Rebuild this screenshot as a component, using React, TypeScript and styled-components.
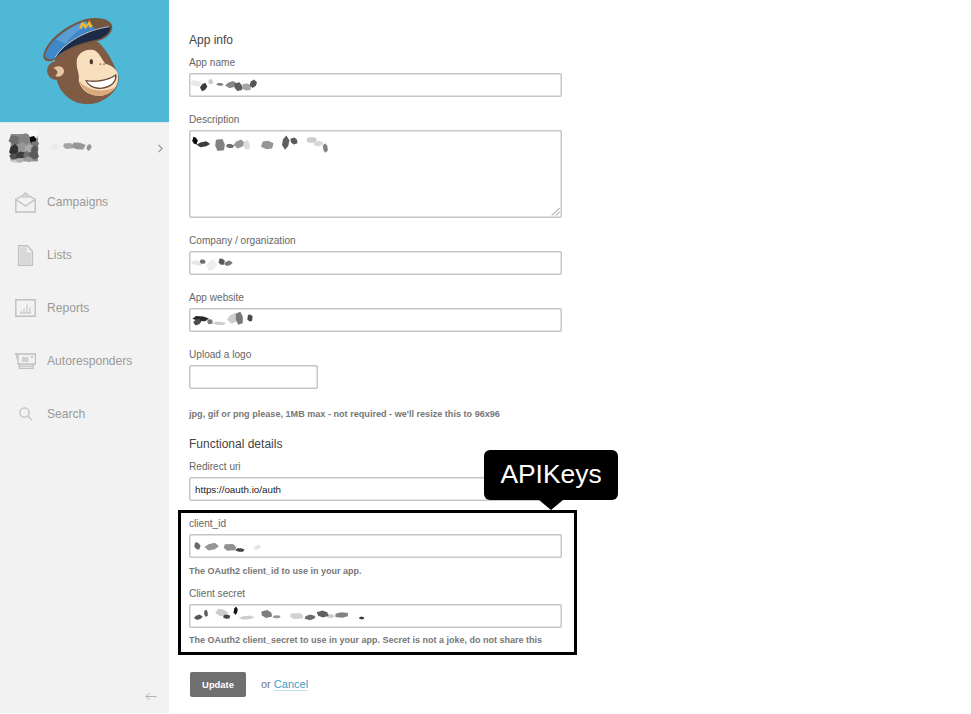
import React from "react";
import styled, { createGlobalStyle } from "styled-components";

const GlobalStyle = createGlobalStyle`
  html, body {
    margin: 0;
    padding: 0;
    background: #fff;
    overflow: hidden;
    font-family: "Liberation Sans", Arial, sans-serif;
  }
`;

const Page = styled.div`
  display: flex;
  width: 971px;
  height: 714px;
`;

const Sidebar = styled.aside`
  display: flex;
  flex-direction: column;
  flex: 0 0 169px;
  height: 713px;
  background: #f2f2f2;
`;

const Brand = styled.div`
  display: flex;
  justify-content: flex-start;
  align-items: flex-start;
  height: 123px;
  padding: 5px 0 0 30px;
  box-sizing: border-box;
  background: #4fb8d6;
  border-bottom: 1px solid #d8eef4;
`;

const Account = styled.div`
  position: relative;
  height: 52px;
`;

const AccountSmear = styled.svg`
  display: block;
  filter: blur(0.5px);
`;

const Chevron = styled.svg`
  position: absolute;
  left: 157px;
  top: 21px;
`;

const Nav = styled.nav`
  display: flex;
  flex-direction: column;
  gap: 29px;
  padding: 15px 0 0 15px;
`;

const NavItem = styled.a`
  display: flex;
  align-items: center;
  gap: 11px;
  height: 24px;
  font-size: 12.1px;
  color: #9a9a9a;
`;

const NavIcon = styled.svg`
  flex: 0 0 21px;
`;

const Collapse = styled.div`
  display: flex;
  justify-content: flex-end;
  margin-top: auto;
  padding: 0 12px 12px 0;
`;

const Main = styled.main`
  flex: 1;
  padding: 33px 0 0 20px;
`;

const Heading = styled.h2`
  margin: 0 0 8px;
  font-size: 12px;
  line-height: 14px;
  font-weight: 400;
  color: #444;
`;

const Field = styled.div<{ $gap?: number }>`
  margin-bottom: ${({ $gap }) => $gap ?? 15}px;
`;

const Label = styled.label`
  display: block;
  padding-top: 1px;
  margin-bottom: 3px;
  font-size: 10.1px;
  line-height: 14px;
  color: #666;
`;

const Input = styled.div<{ $width?: number; $height?: number }>`
  position: relative;
  width: ${({ $width }) => $width ?? 373}px;
  height: ${({ $height }) => $height ?? 24}px;
  box-sizing: border-box;
  padding: 0 6px;
  border-radius: 2px;
  box-shadow: inset 0 0 0 1.5px #c6c6c6;
  background: #fff;
  font-size: 9.8px;
  line-height: 25px;
  color: #222;
`;

const SmearSvg = styled.svg`
  position: absolute;
  left: 0;
  top: 0;
  filter: blur(0.4px);
`;

const Grip = styled.svg`
  position: absolute;
  right: 2px;
  bottom: 2px;
`;

const Hint = styled.p<{ $top?: number; $gap?: number; $size?: number }>`
  margin: ${({ $top }) => $top ?? 0}px 0 ${({ $gap }) => $gap ?? 0}px;
  font-size: ${({ $size }) => $size ?? 9}px;
  line-height: 14px;
  font-weight: 700;
  color: #777;
`;

const KeysBox = styled.section`
  position: relative;
  width: 399px;
  box-sizing: border-box;
  margin: -6px 0 17px -11px;
  padding: 3px 0 5px 8px;
  border: 3px solid #000;
`;

const Callout = styled.div`
  position: absolute;
  left: 303px;
  top: -63px;
  width: 134px;
  height: 50px;
  border-radius: 6px;
  background: #000;
  color: #fff;
  font-size: 26.4px;
  line-height: 48px;
  text-align: center;

  &::after {
    content: "";
    position: absolute;
    left: 55px;
    bottom: -10px;
    border-left: 12px solid transparent;
    border-right: 12px solid transparent;
    border-top: 10px solid #000;
  }
`;

const Actions = styled.div`
  display: flex;
  align-items: center;
  padding-left: 1px;
`;

const UpdateButton = styled.button`
  width: 56px;
  height: 25px;
  padding: 0;
  border: 0;
  border-radius: 2px;
  background: #6f6f6f;
  color: #fff;
  font-family: inherit;
  font-size: 9.4px;
  font-weight: 700;
`;

const OrText = styled.span`
  margin: -2px 0 0 15px;
  font-size: 11px;
  color: #777;
`;

const CancelLink = styled.a`
  border-bottom: 1px solid #bfe3ee;
  color: #36a2c4;
`;

type Blob = [number, number, number, number, number];

// rough polygon so the redacted values look like the pixelated smear in the shot
const blobPoints = ([cx, cy, rx, ry]: Blob, seed: number) => {
  const pts: string[] = [];
  for (let i = 0; i < 6; i++) {
    const a = (i / 6) * Math.PI * 2 + seed;
    const k = 1 + 0.45 * Math.abs(Math.sin(seed * 7.3 + i * 2.1));
    pts.push(`${(cx + Math.cos(a) * rx * k).toFixed(1)},${(cy + Math.sin(a) * ry * k).toFixed(1)}`);
  }
  return pts.join(" ");
};

const shade = (v: number) => `rgb(${v},${v},${v})`;

const Smear: React.FC<{ blobs: Blob[]; top: number; height?: number }> = ({ blobs, top, height = 24 }) => (
  <SmearSvg width={373} height={height} viewBox={`57 ${top} 1119 ${height * 3}`}>
    {blobs.map((b, i) => (
      <polygon key={i} points={blobPoints(b, i + 1)} fill={shade(b[4])} />
    ))}
  </SmearSvg>
);

const nameBlobs: Blob[] = [
  [78, 190, 13, 8, 232], [101, 201, 8, 10, 60], [122, 185, 7, 6, 205], [150, 193, 8, 4, 130],
  [184, 194, 14, 8, 135], [205, 200, 11, 10, 95], [230, 201, 11, 10, 165], [250, 191, 9, 9, 85],
];
const descBlobs: Blob[] = [
  [75, 362, 6, 10, 10], [100, 373, 15, 7, 60], [150, 375, 14, 14, 130], [180, 378, 9, 6, 110],
  [208, 372, 13, 10, 150], [230, 375, 9, 11, 220], [292, 375, 14, 12, 150], [347, 368, 9, 15, 95],
  [372, 363, 9, 8, 90], [425, 360, 12, 8, 205], [445, 371, 13, 6, 215], [466, 384, 6, 11, 130],
];
const companyBlobs: Blob[] = [
  [82, 99, 14, 7, 230], [125, 106, 12, 14, 238], [98, 95, 8, 5, 110], [155, 95, 7, 9, 90], [175, 100, 10, 6, 120],
];
const websiteBlobs: Blob[] = [
  [92, 266, 18, 7, 40], [82, 276, 9, 8, 75], [120, 275, 8, 6, 120], [148, 280, 14, 5, 205],
  [190, 265, 14, 12, 205], [208, 265, 10, 15, 120], [240, 264, 6, 10, 75],
];
const clientBlobs: Blob[] = [
  [82, 318, 7, 10, 105], [125, 320, 16, 9, 150], [180, 322, 18, 8, 145], [210, 330, 10, 5, 70], [262, 322, 9, 6, 230],
];
const secretBlobs: Blob[] = [
  [155, 518, 14, 10, 205], [230, 533, 18, 5, 205], [380, 528, 20, 7, 210], [480, 528, 10, 6, 205],
  [85, 532, 10, 6, 85], [108, 520, 5, 8, 90], [170, 530, 8, 6, 70],
  [197, 512, 5, 9, 20], [290, 522, 14, 9, 125], [320, 530, 9, 4, 150],
  [420, 532, 14, 6, 110], [458, 522, 14, 8, 95], [515, 525, 16, 7, 130], [575, 534, 7, 3, 60],
];
const accountBlobs: Blob[] = [
  [165, 441, 10, 10, 235], [205, 438, 15, 7, 165], [235, 438, 16, 10, 150], [267, 442, 6, 8, 150],
];
const avatarBlobs: Blob[] = [
  [100, 403, 14, 9, 250], [45, 420, 14, 13, 110], [72, 418, 14, 14, 130], [99, 420, 9, 9, 10],
  [105, 432, 9, 8, 120], [42, 450, 12, 13, 50], [68, 443, 13, 13, 150], [88, 445, 11, 11, 170],
  [104, 448, 10, 9, 90], [42, 470, 11, 8, 80], [62, 466, 11, 10, 60], [82, 468, 11, 11, 110],
  [102, 465, 11, 11, 90], [58, 481, 12, 6, 175], [85, 478, 11, 6, 155], [42, 483, 7, 4, 200],
];

const Logo = () => (
  <svg width="100" height="110" viewBox="0 0 300 330">
    <circle cx="79" cy="197" r="28" fill="#7f5b44" />
    <path d="M78 150C104 108 175 88 205 112C230 135 250 170 266 215C270 250 235 284 195 295C150 305 105 285 85 240C74 210 70 175 78 150Z" fill="#7f5b44" />
    <path d="M70 190C82 178 102 184 102 198C102 212 84 220 76 212C86 206 84 194 70 190Z" fill="#e9c6a3" />
    <path d="M40 152C46 112 100 64 165 43C205 34 242 42 247 64C248 88 222 106 195 110C150 118 104 138 76 162C60 174 40 170 40 152Z" fill="#75563f" />
    <path d="M45 151C52 116 102 70 166 49L196 70L76 158C62 167 46 164 45 151Z" fill="#3f87c6" />
    <path d="M78 103C100 80 135 60 166 49L174 60C148 72 124 92 106 118Z" fill="#5a9dd4" />
    <path d="M76 158C102 112 170 72 241 63C243 84 220 101 195 105C150 113 104 132 76 158Z" fill="#1c2a48" />
    <path d="M76 156C104 112 170 74 238 65" fill="none" stroke="#dfe6ec" strokeWidth="2.5" />
    <path d="M147 68L156 50L170 60L178 46L188 64L180 69L175 61L167 72L158 62L155 73Z" fill="#f0b62d" />
    <path d="M140 175C138 148 162 130 190 135C208 140 214 162 226 176C252 184 266 198 264 216C266 244 248 266 215 272C180 276 152 256 146 226C150 212 140 195 140 175Z" fill="#f8dfbd" />
    <path d="M148 228C158 258 184 276 215 272C232 270 248 258 254 246C228 262 176 262 148 228Z" fill="#d9a97c" />
    <path d="M165 224C198 232 238 222 259 207C264 230 244 250 212 252C190 252 172 242 165 224Z" fill="#6b4a36" />
    <path d="M171 229C200 235 236 226 255 214C257 230 240 246 212 248C194 248 178 241 171 229Z" fill="#fff" />
    <ellipse cx="184" cy="170" rx="5" ry="8" fill="#4a3628" />
    <circle cx="211" cy="178" r="3" fill="#a9856a" />
    <circle cx="222" cy="178" r="3" fill="#a9856a" />
  </svg>
);

const CampaignsIcon = () => (
  <NavIcon width="21" height="21" viewBox="0 0 21 21" fill="none" stroke="#c0c0c0" strokeWidth="1.4">
    <path d="M.8 7.5V20h19.4V7.5L10.5 14 .8 7.5Z" />
    <path d="M.8 7.5 6 4.5h9l5.2 3" />
    <path d="M7 4.2 10.5 1 14 4.2" />
    <path d="M6 3.5h9v2H6Z" fill="#d0d0d0" stroke="none" />
  </NavIcon>
);

const ListsIcon = () => (
  <NavIcon width="21" height="21" viewBox="0 0 21 21" fill="none" stroke="#c0c0c0" strokeWidth="1.4">
    <path d="M3.6 .8h9l4.8 5.4v14H3.6Z" />
    <path d="M5 2.2h7v5h4.2v11.8H5Z" fill="#d8d8d8" stroke="none" />
  </NavIcon>
);

const ReportsIcon = () => (
  <NavIcon width="21" height="18" viewBox="0 0 21 18" fill="none" stroke="#c0c0c0" strokeWidth="1.4">
    <path d="M.8 .8h19.4v16.4H.8Z" />
    <path d="M5 14h11M6 12v2M9 9.5V14M12 5.5V14M15 8.5V14" strokeWidth="1" />
  </NavIcon>
);

const AutorespondersIcon = () => (
  <NavIcon width="21" height="16" viewBox="0 0 21 16" fill="none" stroke="#c0c0c0" strokeWidth="1.3">
    <path d="M3 1h17.4v10H3Z" />
    <path d="M3 1 .5 .8 2 2.5V6" />
    <path d="M4.2 11v2.2h14V11M4.2 13.2V15.4h14v-2.2" />
    <path d="M7 4h6.5v5H7Z" fill="#d0d0d0" stroke="none" />
    <path d="M16 3h2v1.6h-2Z" fill="#b8b8b8" stroke="none" />
  </NavIcon>
);

const SearchIcon = () => (
  <NavIcon width="21" height="14" viewBox="0 0 21 14" fill="none" stroke="#c0c0c0" strokeWidth="1.3">
    <circle cx="9.5" cy="5.5" r="4.6" />
    <path d="m13 9 4 4.4" />
  </NavIcon>
);

const navItems = [
  { label: "Campaigns", icon: <CampaignsIcon /> },
  { label: "Lists", icon: <ListsIcon /> },
  { label: "Reports", icon: <ReportsIcon /> },
  { label: "Autoresponders", icon: <AutorespondersIcon /> },
  { label: "Search", icon: <SearchIcon /> },
];

const App = () => (
  <>
    <GlobalStyle />
    <Page>
      <Sidebar>
        <Brand>
          <Logo />
        </Brand>
        <Account>
          <AccountSmear width="110" height="52" viewBox="0 369 330 156">
            <rect x="32" y="402" width="82" height="82" fill="#8c8c8c" />
            {avatarBlobs.map((b, i) => (
              <polygon key={i} points={blobPoints(b, i + 3)} fill={shade(b[4])} />
            ))}
            {accountBlobs.map((b, i) => (
              <polygon key={i} points={blobPoints(b, i + 2)} fill={shade(b[4])} />
            ))}
          </AccountSmear>
          <Chevron width="7" height="9" viewBox="0 0 7 9" fill="none" stroke="#9a9a9a" strokeWidth="1.2">
            <path d="m1.5 .8 3.6 3.7-3.6 3.7" />
          </Chevron>
        </Account>
        <Nav>
          {navItems.map((item) => (
            <NavItem key={item.label}>
              {item.icon}
              {item.label}
            </NavItem>
          ))}
        </Nav>
        <Collapse>
          <svg width="12" height="9" viewBox="0 0 12 9" fill="none" stroke="#b4b4b4" strokeWidth="1">
            <path d="M11.5 4.5H1M4.5 1 1 4.5 4.5 8" />
          </svg>
        </Collapse>
      </Sidebar>
      <Main>
        <Heading>App info</Heading>
        <Field>
          <Label>App name</Label>
          <Input>
            <Smear blobs={nameBlobs} top={159} />
          </Input>
        </Field>
        <Field>
          <Label>Description</Label>
          <Input $height={88}>
            <Smear blobs={descBlobs} top={330} height={88} />
            <Grip width="9" height="9" viewBox="0 0 9 9" stroke="#888" strokeWidth="1">
              <path d="M8.5 1 1 8.5M8.5 5 5 8.5" />
            </Grip>
          </Input>
        </Field>
        <Field>
          <Label>Company / organization</Label>
          <Input>
            <Smear blobs={companyBlobs} top={63} />
          </Input>
        </Field>
        <Field>
          <Label>App website</Label>
          <Input>
            <Smear blobs={websiteBlobs} top={234} />
          </Input>
        </Field>
        <Field $gap={18}>
          <Label>Upload a logo</Label>
          <Input $width={129} />
        </Field>
        <Hint $gap={16} $size={9.1}>
          jpg, gif or png please, 1MB max - not required - we'll resize this to 96x96
        </Hint>
        <Heading>Functional details</Heading>
        <Field>
          <Label>Redirect uri</Label>
          <Input>https://oauth.io/auth</Input>
        </Field>
        <KeysBox>
          <Callout>APIKeys</Callout>
          <Label>client_id</Label>
          <Input>
            <Smear blobs={clientBlobs} top={282} />
          </Input>
          <Hint $top={6} $gap={8}>
            The OAuth2 client_id to use in your app.
          </Hint>
          <Label>Client secret</Label>
          <Input>
            <Smear blobs={secretBlobs} top={492} />
          </Input>
          <Hint $top={5}>The OAuth2 client_secret to use in your app. Secret is not a joke, do not share this</Hint>
        </KeysBox>
        <Actions>
          <UpdateButton>Update</UpdateButton>
          <OrText>
            or <CancelLink>Cancel</CancelLink>
          </OrText>
        </Actions>
      </Main>
    </Page>
  </>
);

export default App;
